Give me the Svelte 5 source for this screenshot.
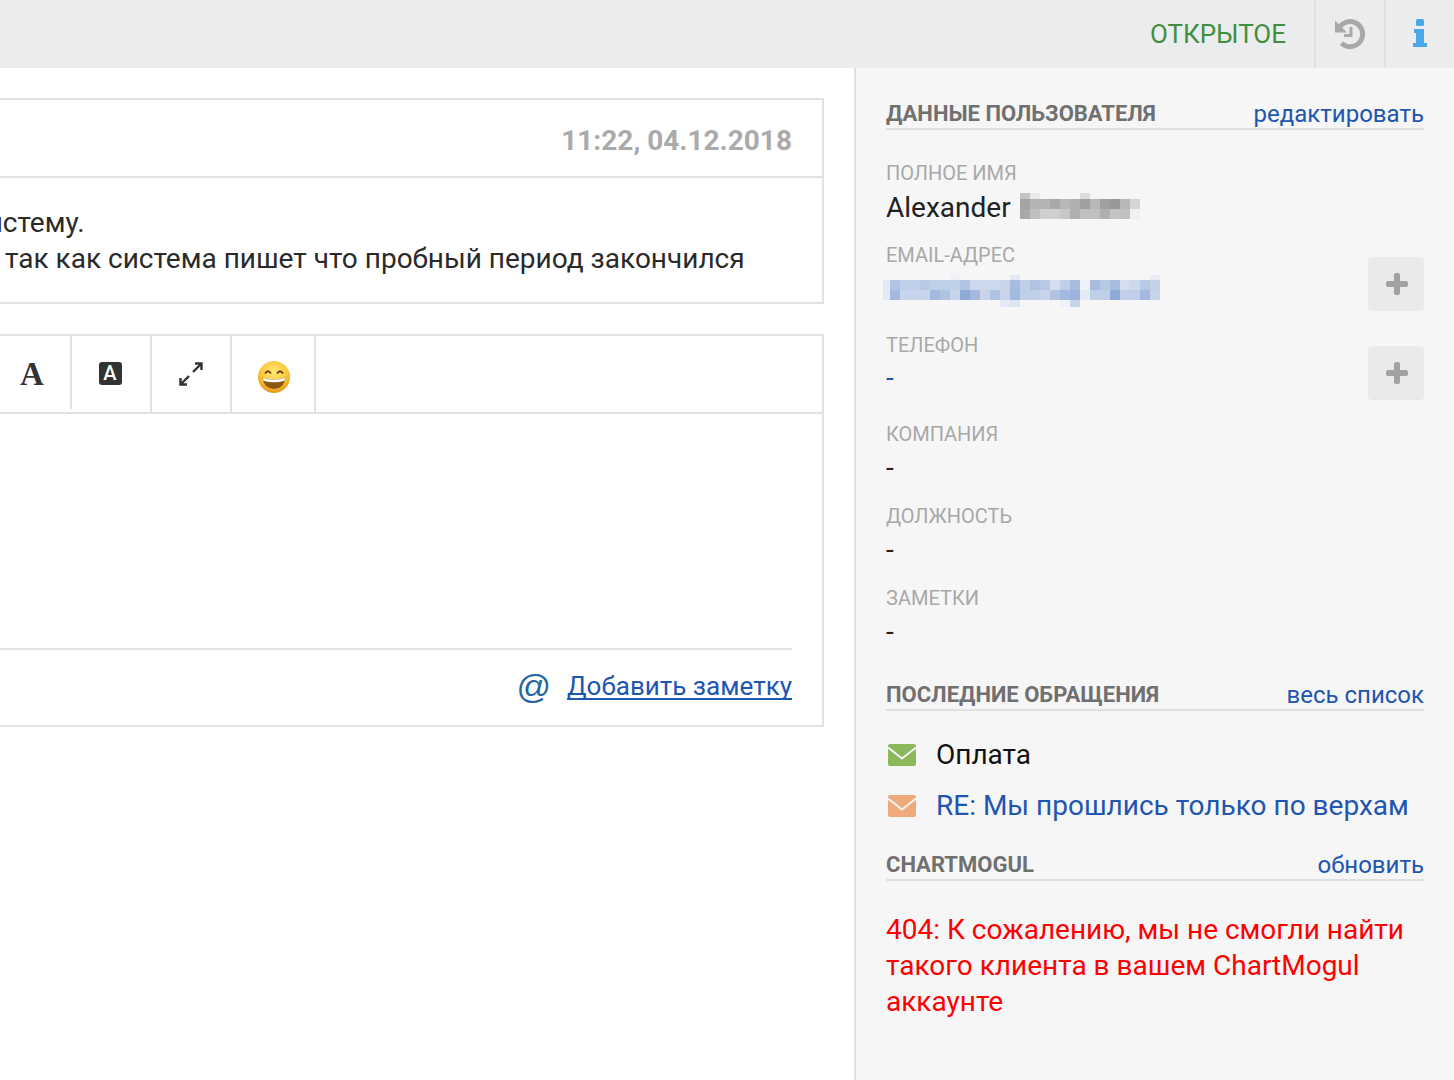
<script>
  const nameRows = [
    ['#c4c4c4','#e8e8e8','','','','','#dddddd','','','','',''],
    ['#a4a4a4','#b4b4b4','#b4b4b4','#a8a8a8','#b8b8b8','#b0b0b0','#a0a0a0','#b8b8b8','#a0a0a0','#989898','#b8b8b8','#d4d4d4'],
    ['#a8a8a8','#c0c0c0','#d0d0d0','#d0d0d0','#c8c8c8','#b0b0b0','#c0c0c0','#c0c0c0','#b0b0b0','#c4c4c4','#c0c0c0','#f0f0f0']
  ];
  const h = (s) => s.split(' ').map((c) => (c === '-' ? '' : '#' + c));
  const emailRows = [
    h('- - - - - - - eef1f8 - - - - - e4eaf5 - - - - - - - - - - - - - e8edf6'),
    h('e4eaf5 b0c3e3 c0cfe8 c0cfe8 b8c9e6 c0cfe8 c0cfe8 c0cfe8 b0c3e3 ccd8ec ccd8ec ccd8ec c8d4eb a8bce0 c0cfe8 b0c3e3 b8c9e6 d4def0 c0cfe8 a8bce0 eef1f8 a8bce0 b8c9e6 a8bce0 d4def0 ccd8ec b8c9e6 c4d1e9'),
    h('e4eaf5 a4b9e0 c8d4eb c8d4eb c8d4eb a4b9e0 b0c3e3 c8d4eb 8fa9d8 a4b9e0 c8d4eb b0c3e3 c8d4eb a4b9e0 c0cfe8 c0cfe8 c8d4eb b0c3e3 a4b9e0 9db3dd e4eaf5 c0cfe8 c0cfe8 8fa9d8 c0cfe8 c0cfe8 a4b9e0 c8d4eb'),
    h('- - - - - - - - - - - - e4eaf5 dde4f2 - - - - eef1f8 c8d4eb - - - - - - - -')
  ];
</script>

<div class="page">
  <header class="topbar">
    <span class="status">ОТКРЫТОЕ</span>
    <div class="tool">
      <svg width="32" height="32" viewBox="0 0 32 32" fill="none">
        <path d="M4.300 12A12.500 12.500 0 1 1 7.500 25.200" stroke="#a8a8a8" stroke-width="5"/>
        <path d="M1 2.500v12h12z" fill="#a8a8a8"/>
        <path d="M17 9v8.500h-7" stroke="#a8a8a8" stroke-width="3"/>
      </svg>
    </div>
    <div class="tool last">
      <svg width="14" height="30" viewBox="0 0 14 30">
        <rect x="3" y="0" width="8" height="7" rx="1.500" fill="#4aa8e8"/>
        <path d="M1 10h10v14h3v3.500q0 .5-.5 .5H.5q-.5 0-.5-.5V24h3V14H1z" fill="#4aa8e8"/>
      </svg>
    </div>
  </header>

  <div class="main">
    <section class="left">
      <div class="card message">
        <div class="msg-head">11:22, 04.12.2018</div>
        <div class="msg-body">
          <div class="line1">систему.</div>
          <div class="line2">так как система пишет что пробный период закончился</div>
        </div>
      </div>

      <div class="card editor">
        <div class="toolbar">
          <div class="tb first"><span class="serif-a">A</span></div>
          <div class="tb w80"><span class="box-a">A</span></div>
          <div class="tb w80">
            <svg width="26" height="26" viewBox="0 0 26 26" fill="none">
              <path d="M15 11l8-8M17 2.500h6.500V9M11 15l-8 8M2.500 17v6.500H9" stroke="#333" stroke-width="2.400"/>
            </svg>
          </div>
          <div class="tb w84">
            <svg width="34" height="34" viewBox="0 0 34 34">
              <defs>
                <radialGradient id="face" cx="50%" cy="35%" r="65%">
                  <stop offset="0" stop-color="#ffe878"/>
                  <stop offset="0.65" stop-color="#fbc53a"/>
                  <stop offset="1" stop-color="#e8951a"/>
                </radialGradient>
              </defs>
              <circle cx="17" cy="17" r="16" fill="url(#face)"/>
              <path d="M8 13.500q3-4.500 6 0M20 13.500q3-4.500 6 0" stroke="#6b4310" stroke-width="1.800" fill="none"/>
              <path d="M5.500 17.500q11.500 4 23 0q-1 11-11.500 11.500q-10.500-.5-11.500-11.500z" fill="#8a5a12"/>
              <path d="M6 17.700q11 3.800 22 0l-.4 3q-10.600 3.200-21.200 0z" fill="#fff"/>
            </svg>
          </div>
        </div>
        <div class="edit-area"></div>
        <div class="edit-foot">
          <span class="at">@</span>
          <a class="note" href="#note">Добавить заметку</a>
        </div>
      </div>
    </section>

    <aside class="side">
      <div class="sec-head first-sec">
        <h2>ДАННЫЕ ПОЛЬЗОВАТЕЛЯ</h2>
        <a href="#edit">редактировать</a>
      </div>

      <div class="label l-name">ПОЛНОЕ ИМЯ</div>
      <div class="value name">
        <span>Alexander</span>
        <div class="pix name-pix">
          {#each nameRows as row, r}
            <div class="pix-row r{r}">
              {#each row as c}<i style:background={c}></i>{/each}
            </div>
          {/each}
        </div>
      </div>

      <div class="with-add email">
        <div>
          <div class="label">EMAIL-АДРЕС</div>
          <div class="pix email-pix">
            {#each emailRows as row, r}
              <div class="pix-row e{r}">
                {#each row as c}<i style:background={c}></i>{/each}
              </div>
            {/each}
          </div>
        </div>
        <div class="add"><span class="plus"></span></div>
      </div>

      <div class="with-add phone">
        <div>
          <div class="label">ТЕЛЕФОН</div>
          <div class="value link-dash">-</div>
        </div>
        <div class="add"><span class="plus"></span></div>
      </div>

      <div class="label l-company">КОМПАНИЯ</div>
      <div class="value dash">-</div>
      <div class="label l-next">ДОЛЖНОСТЬ</div>
      <div class="value dash">-</div>
      <div class="label l-next">ЗАМЕТКИ</div>
      <div class="value dash">-</div>

      <div class="sec-head recent">
        <h2>ПОСЛЕДНИЕ ОБРАЩЕНИЯ</h2>
        <a href="#all">весь список</a>
      </div>

      <div class="ticket t1">
        <svg width="28" height="22" viewBox="0 0 28 22">
          <rect width="28" height="22" rx="2" fill="#8cb85c"/>
          <path d="M0 3.500l14 11 14-11" fill="none" stroke="#f6f6f6" stroke-width="2"/>
        </svg>
        <span>Оплата</span>
      </div>
      <div class="ticket t2">
        <svg width="28" height="22" viewBox="0 0 28 22">
          <rect width="28" height="22" rx="2" fill="#eeaa7a"/>
          <path d="M0 3.500l14 11 14-11" fill="none" stroke="#f6f6f6" stroke-width="2"/>
        </svg>
        <a href="#t">RE: Мы прошлись только по верхам</a>
      </div>

      <div class="sec-head mogul">
        <h2>CHARTMOGUL</h2>
        <a href="#up">обновить</a>
      </div>

      <p class="error">404: К сожалению, мы не смогли найти такого клиента в вашем ChartMogul аккаунте</p>
    </aside>
  </div>
</div>

<style>
  :global(body) { margin: 0; background: #fff; }
  .page { width: 1454px; height: 1080px; overflow: hidden; font-family: Roboto, "Noto Sans", sans-serif; color: #222; }

  .topbar { height: 68px; background: #ebecee; display: flex; justify-content: flex-end; align-items: stretch; }
  .status { align-self: center; font-size: 26px; line-height: 36px; color: #408f3d; margin-right: 28px; }
  .tool { width: 68px; border-left: 2px solid #e0e1e3; display: flex; align-items: center; justify-content: center; }
  .tool.last { width: 68px; }

  .main { display: flex; height: 1012px; }
  .left { width: 854px; flex: none; overflow: hidden; padding-top: 30px; box-sizing: border-box; }
  .card { width: 824px; box-sizing: border-box; border: 2px solid #e2e2e2; border-left: 0; background: #fff; }

  .message { height: 206px; }
  .msg-head { height: 76px; border-bottom: 2px solid #e2e2e2; text-align: right; padding-right: 30px; font-weight: 700; font-size: 28px; color: #aaa; line-height: 82px; }
  .msg-body { font-size: 28px; line-height: 36px; padding-top: 27px; white-space: nowrap; color: #2a2a2a; }
  .line1 { margin-left: -28px; }
  .line2 { margin-left: 5px; }

  .editor { margin-top: 30px; height: 393px; }
  .toolbar { display: flex; height: 76px; border-bottom: 2px solid #e2e2e2; }
  .tb { box-sizing: border-box; border-right: 2px solid #e2e2e2; display: flex; align-items: center; justify-content: center; }
  .tb.first { width: 72px; height: 73px; }
  .w80 { width: 80px; }
  .w84 { width: 84px; padding-top: 6px; padding-left: 2px; }
  .serif-a { font-family: "Liberation Serif", serif; font-weight: 700; font-size: 33px; color: #333; margin-left: -6px; margin-top: 4px; }
  .box-a { width: 23px; height: 23px; border-radius: 3px; background: #333; color: #fff; font-size: 20px; font-weight: 500; font-family: Roboto, sans-serif; display: flex; align-items: center; justify-content: center; margin-left: -2px; margin-top: -2px; }
  .edit-area { height: 234px; border-bottom: 2px solid #e2e2e2; margin-right: 30px; }
  .edit-foot { display: flex; justify-content: flex-end; align-items: center; gap: 16px; padding: 18px 30px 0 0; }
  .at { font-family: "Liberation Sans", sans-serif; font-size: 34px; line-height: 36px; color: #23659f; }
  .note { font-size: 26px; line-height: 36px; color: #2055b0; text-decoration: underline; text-underline-offset: 3px; text-decoration-thickness: 2px; text-decoration-skip-ink: none; }

  .side { flex: 1; background: #f6f6f6; border-left: 2px solid #dfdfdf; padding: 0 30px; box-sizing: border-box; }
  .sec-head { display: flex; justify-content: space-between; align-items: flex-end; height: 30px; border-bottom: 2px solid #e0e0e0; }
  .sec-head h2 { margin: 0 0 -1px; font-size: 22px; font-weight: 700; color: #707070; line-height: 30px; }
  .sec-head a { font-size: 24px; line-height: 30px; margin-bottom: -1px; color: #2055b0; text-decoration: none; }
  .first-sec { margin-top: 30px; }

  .label { font-size: 20px; line-height: 26px; color: #a8a8a8; }
  .l-name { margin-top: 30px; }
  .value { font-size: 28px; line-height: 36px; }
  .name { display: flex; align-items: flex-start; gap: 9px; margin-top: 4px; height: 36px; color: #222; }
  .pix { display: flex; flex-direction: column; flex: none; }
  .pix-row { display: flex; }
  .pix-row i { display: block; width: 10px; flex: none; }
  .name-pix { margin-top: 3px; }
  .name-pix .r0 { height: 6px; }
  .name-pix .pix-row:not(.r0) { height: 10px; }

  .with-add { display: flex; justify-content: space-between; align-items: flex-start; }
  .email { height: 90px; margin-top: 16px; }
  .email-pix { margin-left: -3px; margin-top: 7px; }
  .email-pix .pix-row i:first-child { width: 7px; }
  .e0 { height: 5px; }
  .e1, .e2 { height: 10px; }
  .e3 { height: 7px; }
  .add { width: 56px; height: 54px; background: #e9eaec; border-radius: 4px; display: flex; align-items: center; justify-content: center; margin-top: 14px; }
  .email .add { margin-top: 15px; }
  .plus { position: relative; width: 22px; height: 6px; background: #a2a2a2; border-radius: 2px; margin-left: 2px; }
  .plus::after { content: ""; position: absolute; left: 8px; top: -8px; width: 6px; height: 22px; background: #a2a2a2; border-radius: 2px; }
  .phone { height: 89px; }
  .link-dash { color: #2055b0; margin-top: 2px; }
  .l-next { margin-top: 17px; }
  .dash { margin-top: 3px; height: 36px; color: #222; }

  .recent { margin-top: 29px; }
  .ticket { display: flex; align-items: center; gap: 20px; font-size: 28px; line-height: 36px; margin-left: 2px; color: #111; }
  .ticket a { color: #2055b0; text-decoration: none; }
  .t1 { margin-top: 26px; }
  .t2 { margin-top: 15px; }
  .mogul { margin-top: 25px; }
  .error { margin: 31px 0 0; font-size: 28px; line-height: 36px; color: #ff0000; }
</style>
